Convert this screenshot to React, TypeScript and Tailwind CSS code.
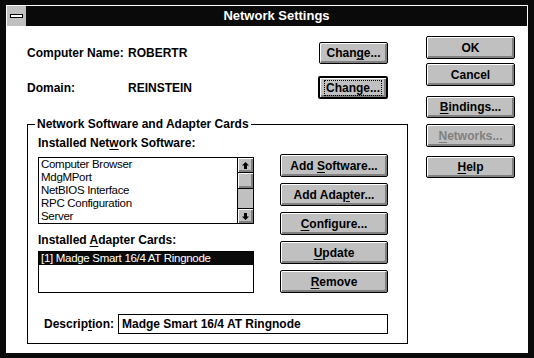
import type { ReactNode } from 'react';

const bevel = 'shadow-[inset_1px_1px_0_#ffffff,inset_-2px_-2px_0_#808080]';

function U({ children }: { children: ReactNode }) {
  return <span className="underline underline-offset-[2px] decoration-1">{children}</span>;
}

function Btn({
  children,
  className = '',
  isDefault = false,
  disabled = false,
  focus = false,
}: {
  children: ReactNode;
  className?: string;
  isDefault?: boolean;
  disabled?: boolean;
  focus?: boolean;
}) {
  return (
    <div
      className={`flex items-center justify-center bg-[#c0c0c0] border-black rounded-[2px] text-[12px] font-bold leading-none ${bevel} ${
        isDefault ? 'border-2' : 'border'
      } ${disabled ? 'text-[#808080]' : 'text-black'} ${className}`}
    >
      <span className={focus ? 'outline-1 outline-dotted outline-black px-[1px] py-[1px]' : ''}>{children}</span>
    </div>
  );
}

function Arrow({ down = false }: { down?: boolean }) {
  return (
    <svg width="7" height="7" viewBox="0 0 7 7" className={down ? 'rotate-180' : ''}>
      <path d="M3.5 0 L7 3.5 H5 V7 H2 V3.5 H0 Z" fill="black" />
    </svg>
  );
}

function ScrollBar() {
  return (
    <div className="w-[16px] border-l border-black flex flex-col">
      <div className={`h-[15px] bg-[#c0c0c0] border-b border-black flex items-center justify-center ${bevel}`}>
        <Arrow />
      </div>
      <div className={`h-[16px] bg-[#c0c0c0] border-b border-black ${bevel}`} />
      <div className="flex-1 bg-[#c0c0c0]" />
      <div className={`h-[15px] bg-[#c0c0c0] border-t border-black flex items-center justify-center ${bevel}`}>
        <Arrow down />
      </div>
    </div>
  );
}

export default function App() {
  const software = ['Computer Browser', 'MdgMPort', 'NetBIOS Interface', 'RPC Configuration', 'Server'];

  return (
    <div className="w-[534px] h-[358px] bg-[#0a0a0a] pt-[5px] pl-[6px] pr-[6px] pb-[5px] font-['Liberation_Sans',Arial,sans-serif] text-black">
      <div className="h-full bg-white flex flex-col">
        {/* Title bar */}
        <div className="mx-[1px] mt-[1px] h-[20px] bg-[#0a0a0a] flex">
          <div className="w-[19px] bg-[#c0c0c0] flex items-center justify-center">
            <div className="w-[13px] h-[4px] bg-white border border-black" />
          </div>
          <div className="flex-1 flex items-center justify-center text-white font-bold text-[13px]">
            Network Settings
          </div>
        </div>

        {/* Body */}
        <div className="flex flex-1">
          <div className="w-[402px] pl-[21px] pt-[16px]">
            <div className="flex items-center h-[22px] text-[12px] font-bold">
              <span className="w-[101px]">Computer Name:</span>
              <span>ROBERTR</span>
              <Btn className="ml-auto mr-[20px] w-[69px] h-[22px]">
                Chan<U>g</U>e...
              </Btn>
            </div>
            <div className="flex items-center h-[23px] mt-[12px] text-[12px] font-bold">
              <span className="w-[101px]">Domain:</span>
              <span>REINSTEIN</span>
              <Btn isDefault focus className="ml-auto mr-[20px] w-[70px] h-[23px]">
                Chan<U>g</U>e...
              </Btn>
            </div>

            {/* Group box */}
            <div className="relative mt-[25px] border border-black pl-[10px] pt-[11px] pb-[9px]">
              <span className="absolute -top-[8px] left-[7px] bg-white px-[2px] text-[12px] font-bold leading-[14px]">
                Network Software and Adapter Cards
              </span>
              <div className="flex">
                <div className="w-[216px]">
                  <div className="text-[12px] font-bold leading-[14px]">
                    Installed Net<U>w</U>ork Software:
                  </div>
                  <div className="mt-[7px] h-[67px] border border-black flex">
                    <div className="flex-1 pl-[2px] text-[11.5px] leading-[13px] tracking-[-0.3px]">
                      {software.map((s) => (
                        <div key={s}>{s}</div>
                      ))}
                    </div>
                    <ScrollBar />
                  </div>
                  <div className="mt-[9px] text-[12px] font-bold leading-[14px]">
                    Installed <U>A</U>dapter Cards:
                  </div>
                  <div className="mt-[4px] h-[42px] border border-black">
                    <div className="bg-[#0a0a0a] text-white pl-[2px] text-[11.5px] leading-[13px] tracking-[-0.3px]">
                      [1] Madge Smart 16/4 AT Ringnode
                    </div>
                  </div>
                </div>
                <div className="ml-[26px] mt-[18px] w-[108px] flex flex-col gap-[6px]">
                  <Btn className="h-[23px]">
                    Add <U>S</U>oftware...
                  </Btn>
                  <Btn className="h-[23px]">
                    Add Ada<U>p</U>ter...
                  </Btn>
                  <Btn className="h-[23px]">
                    <U>C</U>onfigure...
                  </Btn>
                  <Btn className="h-[23px]">
                    <U>U</U>pdate
                  </Btn>
                  <Btn className="h-[23px]">
                    <U>R</U>emove
                  </Btn>
                </div>
              </div>
              <div className="mt-[21px] flex items-center h-[20px] text-[12px] font-bold">
                <span className="ml-[6px] w-[74px]">
                  Descrip<U>t</U>ion:
                </span>
                <div className="w-[270px] h-[20px] border border-black flex items-center pl-[3px]">
                  Madge Smart 16/4 AT Ringnode
                </div>
              </div>
            </div>
          </div>

          {/* Right buttons */}
          <div className="ml-[18px] pt-[10px] w-[89px] flex flex-col">
            <Btn className="h-[23px]">OK</Btn>
            <Btn className="h-[23px] mt-[4px]">Cancel</Btn>
            <Btn className="h-[22px] mt-[10px]">
              <U>B</U>indings...
            </Btn>
            <Btn disabled className="h-[23px] mt-[6px]">
              <U>N</U>etworks...
            </Btn>
            <Btn className="h-[22px] mt-[9px]">
              <U>H</U>elp
            </Btn>
          </div>
        </div>
      </div>
    </div>
  );
}
